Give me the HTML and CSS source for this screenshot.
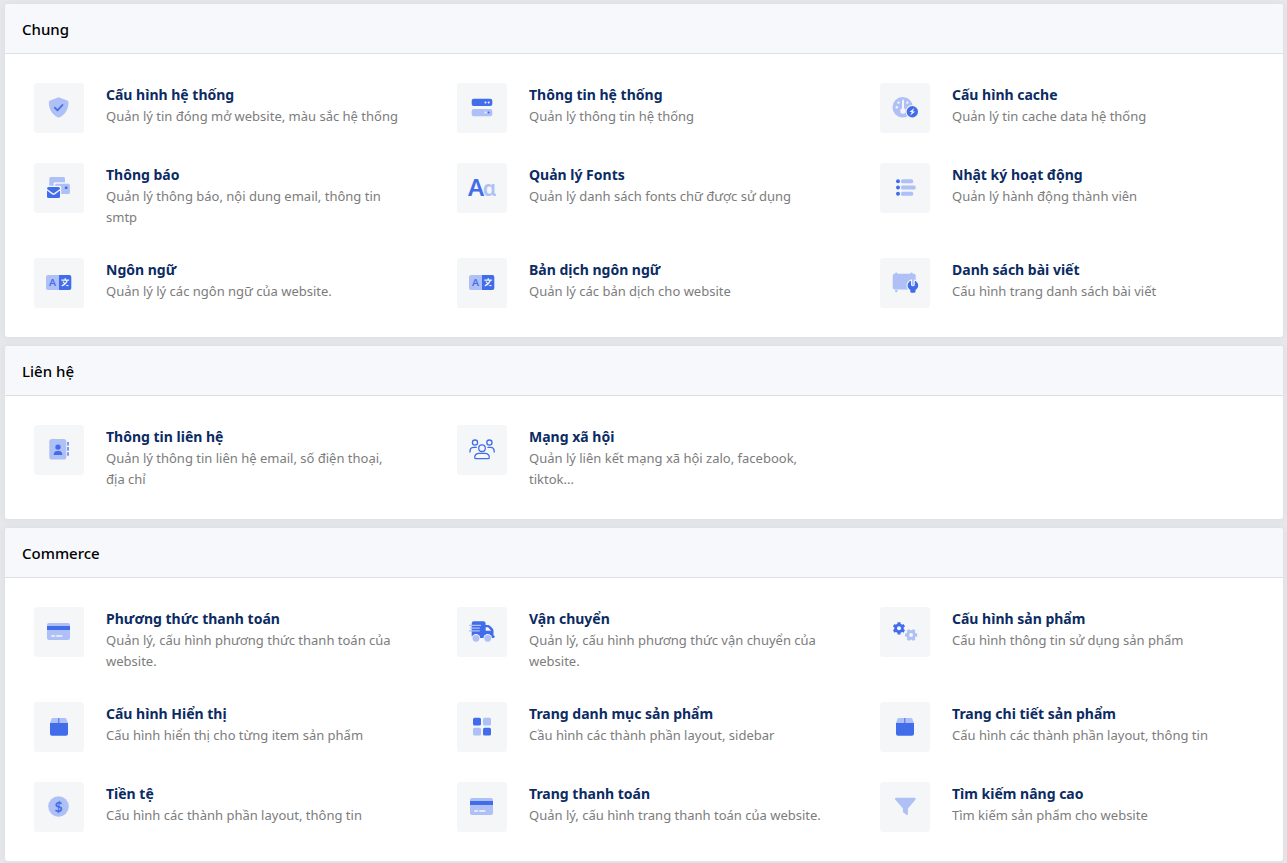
FILE: index.html
```html
<!DOCTYPE html>
<html lang="vi">
<head>
<meta charset="utf-8">
<meta name="viewport" content="width=device-width, initial-scale=1">
<title>Cấu hình</title>
<link rel="stylesheet" href="styles.css">
</head>
<body>
<svg class="sprite" aria-hidden="true">
  <symbol id="i-shield" viewBox="10 10 30 30">
    <path class="light" d="M24.7 14.3l8.6 3.3c.8.3 1.2.9 1.2 1.7 0 6.500-2.800 12-8.700 15a2.500 2.500 0 0 1-2.200 0c-5.900-3-8.700-8.500-8.700-15 0-.8.4-1.400 1.200-1.700z"/>
    <path class="line" d="M20.800 24.700l2.700 2.600 5-5.300"/>
  </symbol>
  <symbol id="i-server" viewBox="10 10 30 30">
    <rect class="dark" x="14.700" y="15.700" width="20.600" height="7.300" rx="2"/>
    <rect class="light" x="14.700" y="26" width="20.600" height="7.200" rx="2"/>
    <circle class="pale" cx="28.500" cy="19.500" r="1"/><circle class="pale" cx="31.700" cy="19.500" r="1"/>
    <circle class="pale" cx="28.500" cy="29.500" r="1"/><circle class="dark" cx="31.700" cy="29.500" r="1"/>
  </symbol>
  <symbol id="i-gauge" viewBox="10 10 30 30">
    <circle class="light" cx="22.700" cy="24.300" r="10.200"/>
    <path class="pale-line" d="M23 17.500v10"/>
    <circle class="pale" cx="23" cy="28" r="2.700"/>
    <circle class="pale" cx="18.500" cy="19.600" r="1.200"/><circle class="pale" cx="16.800" cy="24.300" r="1.200"/><circle class="pale" cx="27.300" cy="19.600" r="1.200"/>
    <circle class="pale" cx="32.300" cy="28.700" r="6.800"/>
    <circle class="dark" cx="32.300" cy="28.700" r="5.700"/>
    <path class="pale" d="M34.300 25l-4.800 3.900h2.300l-1.600 3.600 5-4h-2.400z"/>
  </symbol>
  <symbol id="i-mail" viewBox="10 10 30 30">
    <rect class="light" x="15.300" y="14" width="15.700" height="11" rx="1.500"/>
    <rect class="pale" x="19.700" y="19.300" width="17" height="13" rx="1"/>
    <rect class="light" x="21" y="20.700" width="14.900" height="10.300" rx="1.500"/>
    <rect class="dark" x="30.800" y="23.400" width="2.700" height="2.700" rx=".5"/>
    <rect class="pale" x="12" y="22.800" width="15.200" height="13" rx="1.500"/>
    <rect class="dark" x="13" y="24" width="13" height="11" rx="1.500"/>
    <path class="thin-pale" d="M13 26.800l5.300 3.800q1.200.8 2.400 0l5.300-3.800"/>
  </symbol>
  <symbol id="i-fonts" viewBox="10 10 30 30">
    <text class="dark glyph glyph-fonts" x="19.100" y="33.200" font-size="24" text-anchor="middle">A</text>
    <text class="light glyph glyph-fonts" x="32.300" y="33.200" font-size="21" text-anchor="middle">ɑ</text>
  </symbol>
  <symbol id="i-list" viewBox="10 10 30 30">
    <g class="dark"><circle cx="18" cy="18.300" r="2"/><circle cx="18" cy="24.600" r="2"/><circle cx="18" cy="30.800" r="2"/></g>
    <g class="light"><rect x="21" y="16.300" width="12.200" height="4" rx="1.600"/><rect x="21" y="22.600" width="14.700" height="4" rx="1.600"/><rect x="21" y="28.800" width="12.200" height="4" rx="1.600"/></g>
  </symbol>
  <symbol id="i-language" viewBox="10 10 30 30">
    <path class="light" d="M14 17h11v15H14q-2 0-2-2V19q0-2 2-2z"/>
    <path class="dark" d="M25 17h10.300q2 0 2 2v11q0 2-2 2H25z"/>
    <text class="dark glyph" x="18.500" y="28.200" font-size="10" text-anchor="middle">A</text>
    <path class="thin-pale" d="M27.800 22.100h6.800M31.200 20.700v1.400M33.200 22.300q-1 3.600-5 5.300M29.300 24q1.600 2.600 4.600 3.600"/>
  </symbol>
  <symbol id="i-board" viewBox="10 10 30 30">
    <rect class="light" x="12.700" y="15.800" width="23" height="15.600" rx="2"/>
    <circle class="light" cx="16.300" cy="15.700" r="1.200"/><circle class="light" cx="31.500" cy="15.700" r="1.200"/><circle class="light" cx="16.300" cy="33" r="1.300"/>
    <path class="wrench-halo" d="M31 22.800v3.600q0 1.900 1.900 1.900t1.900-1.900v-3.600c2.200.8 3.400 2.600 3.400 4.800 0 2-1 3.500-2.700 4.300v1.600q0 1.300-1.300 1.300h-2.600q-1.300 0-1.300-1.300v-1.600c-1.700-.8-2.700-2.300-2.700-4.300 0-2.200 1.200-4 3.400-4.800z"/>
    <path class="dark" d="M31 22.800v3.600q0 1.900 1.900 1.900t1.900-1.900v-3.600c2.200.8 3.400 2.600 3.400 4.800 0 2-1 3.500-2.700 4.300v1.600q0 1.300-1.300 1.300h-2.600q-1.300 0-1.300-1.300v-1.600c-1.700-.8-2.700-2.300-2.700-4.300 0-2.200 1.200-4 3.400-4.800z"/>
  </symbol>
  <symbol id="i-contact" viewBox="10 10 30 30">
    <rect class="light" x="15.300" y="14" width="17" height="20.600" rx="2.600"/>
    <circle class="dark" cx="24" cy="22.100" r="2.700"/>
    <path class="dark" d="M19.700 30c0-2.600 1.400-3.900 3.500-3.900h1.700c2.100 0 3.500 1.300 3.500 3.900z"/>
    <path class="tab" d="M33 17h2v3.600h-2zM33 22.100h2v3.600h-2zM33 27.200h2v3.600h-2z"/>
  </symbol>
  <symbol id="i-users" viewBox="10 10 30 30">
    <g class="outline"><circle cx="18" cy="17.600" r="2.600"/><circle cx="32.400" cy="17.600" r="2.600"/><circle cx="25" cy="23.200" r="3.300"/>
    <path d="M18.500 33.600q-.8 0-.8-1c0-2.700 2-4.300 4.500-4.300h5.600c2.500 0 4.500 1.600 4.500 4.300q0 1-.8 1zM13 27v-.6c0-2.600 1.500-4 3.700-4h2.600M37.200 27v-.6c0-2.600-1.500-4-3.700-4h-2.600"/></g>
  </symbol>
  <symbol id="i-card" viewBox="10 10 30 30">
    <rect class="light" x="13" y="16" width="23" height="17" rx="2"/>
    <path class="dark" d="M13 19h23v4H13z"/>
    <path class="dash" d="M17.800 29h2.700M22.800 29h5"/>
  </symbol>
  <symbol id="i-truck" viewBox="10 10 30 30">
    <path class="dark" d="M14.700 16.500q0-2.200 2.200-2.200h9.500q2.200 0 2.200 2.200V18h2.300q1.300 0 2.200.9l2.500 2.600q.9.900.9 2.200v4.800q1.200.1 1.200 1.200t-1.200 1.200H16.700q-2 0-2-2z"/>
    <path class="pale" d="M28.700 20.300h2.300l3.200 3.500h-5.500z"/>
    <circle class="pale" cx="19" cy="31.300" r="4.200"/><circle class="pale" cx="30.700" cy="31.300" r="4.200"/>
    <circle class="light" cx="19" cy="31.300" r="3.400"/><circle class="light" cx="30.700" cy="31.300" r="3.400"/>
    <path class="speed" d="M12.700 18.400h10.800M13.500 21.100h9M12.500 23.900h9.800"/>
  </symbol>
  <symbol id="i-gears" viewBox="10 10 30 30">
    <g class="gear-dark"><path d="M19 15.200v12.200M13.700 18.200l10.600 6.200M13.700 24.400l10.600-6.200"/><circle cx="19" cy="21.300" r="3.300"/></g>
    <g class="gear-light"><path d="M25 28h12.200M28 22.700l6.200 10.600M28 33.300l6.200-10.600"/><circle cx="31.100" cy="28" r="3.300"/></g>
    <circle class="pale" cx="19" cy="21.300" r="2"/><circle class="pale" cx="31.100" cy="28" r="2"/>
  </symbol>
  <symbol id="i-box" viewBox="10 10 30 30">
    <path class="light" d="M18.500 16h12.700q.8 0 1.100.7l1.700 4.500H16l1.500-4.500q.3-.7 1-.7z"/>
    <path class="dark" d="M24.300 16h1v5h8.700v10.700q0 2-2 2H18q-2 0-2-2V21h8.300z"/>
  </symbol>
  <symbol id="i-tiles" viewBox="10 10 30 30">
    <g class="dark"><rect x="16" y="15.700" width="8" height="7.800" rx="1.500"/><rect x="26" y="25.700" width="8" height="7.800" rx="1.500"/></g>
    <g class="light"><rect x="26" y="15.700" width="8" height="7.800" rx="1.500"/><rect x="16" y="25.700" width="8" height="7.800" rx="1.500"/></g>
  </symbol>
  <symbol id="i-money" viewBox="10 10 30 30">
    <circle class="light" cx="24.500" cy="24.500" r="10.300"/>
    <text class="dark glyph" x="24.500" y="29.700" font-size="14" text-anchor="middle">$</text>
  </symbol>
  <symbol id="i-filter" viewBox="10 10 30 30">
    <path class="light" d="M15.900 15.700h18.900q1.500.3.700 1.700l-7.600 9.200v5.500q-.2 1.400-1.500.7l-3-2.200q-.5-.4-.5-1v-3l-7.700-9.200q-.8-1.400.7-1.700z"/>
  </symbol>
</svg>

<main class="page">
  <section class="panel">
    <h2 class="panel-title">Chung</h2>
    <div class="panel-body">
      <a class="item" href="#"><span class="icon"><svg><use href="#i-shield"/></svg></span><span class="text"><strong class="name">Cấu hình hệ thống</strong><span class="desc">Quản lý tin đóng mở website, màu sắc hệ thống</span></span></a>
      <a class="item" href="#"><span class="icon"><svg><use href="#i-server"/></svg></span><span class="text"><strong class="name">Thông tin hệ thống</strong><span class="desc">Quản lý thông tin hệ thống</span></span></a>
      <a class="item" href="#"><span class="icon"><svg><use href="#i-gauge"/></svg></span><span class="text"><strong class="name">Cấu hình cache</strong><span class="desc">Quản lý tin cache data hệ thống</span></span></a>
      <a class="item" href="#"><span class="icon"><svg><use href="#i-mail"/></svg></span><span class="text"><strong class="name">Thông báo</strong><span class="desc">Quản lý thông báo, nội dung email, thông tin smtp</span></span></a>
      <a class="item" href="#"><span class="icon"><svg><use href="#i-fonts"/></svg></span><span class="text"><strong class="name">Quản lý Fonts</strong><span class="desc">Quản lý danh sách fonts chữ được sử dụng</span></span></a>
      <a class="item" href="#"><span class="icon"><svg><use href="#i-list"/></svg></span><span class="text"><strong class="name">Nhật ký hoạt động</strong><span class="desc">Quản lý hành động thành viên</span></span></a>
      <a class="item" href="#"><span class="icon"><svg><use href="#i-language"/></svg></span><span class="text"><strong class="name">Ngôn ngữ</strong><span class="desc">Quản lý lý các ngôn ngữ của website.</span></span></a>
      <a class="item" href="#"><span class="icon"><svg><use href="#i-language"/></svg></span><span class="text"><strong class="name">Bản dịch ngôn ngữ</strong><span class="desc">Quản lý các bản dịch cho website</span></span></a>
      <a class="item" href="#"><span class="icon"><svg><use href="#i-board"/></svg></span><span class="text"><strong class="name">Danh sách bài viết</strong><span class="desc">Cấu hình trang danh sách bài viết</span></span></a>
    </div>
  </section>

  <section class="panel">
    <h2 class="panel-title">Liên hệ</h2>
    <div class="panel-body">
      <a class="item" href="#"><span class="icon"><svg><use href="#i-contact"/></svg></span><span class="text"><strong class="name">Thông tin liên hệ</strong><span class="desc">Quản lý thông tin liên hệ email, số điện thoại, địa chỉ</span></span></a>
      <a class="item" href="#"><span class="icon"><svg><use href="#i-users"/></svg></span><span class="text"><strong class="name">Mạng xã hội</strong><span class="desc">Quản lý liên kết mạng xã hội zalo, facebook, tiktok...</span></span></a>
    </div>
  </section>

  <section class="panel">
    <h2 class="panel-title">Commerce</h2>
    <div class="panel-body">
      <a class="item" href="#"><span class="icon"><svg><use href="#i-card"/></svg></span><span class="text"><strong class="name">Phương thức thanh toán</strong><span class="desc">Quản lý, cấu hình phương thức thanh toán của website.</span></span></a>
      <a class="item" href="#"><span class="icon"><svg><use href="#i-truck"/></svg></span><span class="text"><strong class="name">Vận chuyển</strong><span class="desc">Quản lý, cấu hình phương thức vận chuyển của website.</span></span></a>
      <a class="item" href="#"><span class="icon"><svg><use href="#i-gears"/></svg></span><span class="text"><strong class="name">Cấu hình sản phẩm</strong><span class="desc">Cấu hình thông tin sử dụng sản phẩm</span></span></a>
      <a class="item" href="#"><span class="icon"><svg><use href="#i-box"/></svg></span><span class="text"><strong class="name">Cấu hình Hiển thị</strong><span class="desc">Cấu hình hiển thị cho từng item sản phẩm</span></span></a>
      <a class="item" href="#"><span class="icon"><svg><use href="#i-tiles"/></svg></span><span class="text"><strong class="name">Trang danh mục sản phẩm</strong><span class="desc">Cầu hình các thành phần layout, sidebar</span></span></a>
      <a class="item" href="#"><span class="icon"><svg><use href="#i-box"/></svg></span><span class="text"><strong class="name">Trang chi tiết sản phẩm</strong><span class="desc">Cấu hình các thành phần layout, thông tin</span></span></a>
      <a class="item" href="#"><span class="icon"><svg><use href="#i-money"/></svg></span><span class="text"><strong class="name">Tiền tệ</strong><span class="desc">Cấu hình các thành phần layout, thông tin</span></span></a>
      <a class="item" href="#"><span class="icon"><svg><use href="#i-card"/></svg></span><span class="text"><strong class="name">Trang thanh toán</strong><span class="desc">Quản lý, cấu hình trang thanh toán của website.</span></span></a>
      <a class="item" href="#"><span class="icon"><svg><use href="#i-filter"/></svg></span><span class="text"><strong class="name">Tìm kiếm nâng cao</strong><span class="desc">Tìm kiếm sản phẩm cho website</span></span></a>
    </div>
  </section>
</main>
</body>
</html>
```
FILE: styles.css
```css
* {
  box-sizing: border-box;
}

body {
  margin: 0;
  background: #e5e7eb;
  color: #000;
  font-family: "Noto Sans", "Open Sans", sans-serif;
  font-size: 13px;
  line-height: 21px;
}

.sprite {
  display: none;
}

.page {
  display: flex;
  flex-direction: column;
  gap: 9px;
  padding: 4px 4px 2px 5px;
}

.panel {
  border-radius: 3px;
  background: #fff;
  box-shadow: 0 0 8px rgba(0, 0, 0, 0.05);
}

.panel-title {
  margin: 0;
  padding: 13px 17px 12px;
  border-bottom: 1px solid #dcdfe6;
  border-radius: 3px 3px 0 0;
  background: #f6f8fc;
  font-size: 15px;
  font-weight: 500;
  line-height: 24px;
}

.panel-body {
  display: grid;
  grid-template-columns: repeat(3, minmax(0, 1fr));
  gap: 30px 49px;
  padding: 29px;
}

.item {
  display: flex;
  align-items: flex-start;
  gap: 22px;
  color: inherit;
  text-decoration: none;
}

.icon {
  display: flex;
  flex: none;
  align-items: center;
  justify-content: center;
  width: 50px;
  height: 50px;
  border-radius: 3px;
  background: #f4f6f8;
}

.icon svg {
  width: 30px;
  height: 30px;
}

.text {
  display: flex;
  flex: 1;
  flex-direction: column;
  min-width: 0;
  padding-right: 5px;
}

.name {
  color: #0b2b63;
  font-size: 14px;
  font-weight: 700;
  line-height: 23px;
}

.desc {
  color: #7c7c7c;
}

.light {
  fill: #aec0f5;
}

.dark {
  fill: #416dea;
}

.tab {
  fill: #7d9af0;
}

.pale {
  fill: #f4f6f8;
}

.line,
.outline,
.pale-line,
.thin-pale,
.dash,
.speed {
  fill: none;
  stroke-linecap: round;
  stroke-linejoin: round;
}

.line {
  stroke: #416dea;
  stroke-width: 1.8;
}

.outline {
  stroke: #416dea;
  stroke-width: 1.3;
}

.pale-line {
  stroke: #f4f6f8;
  stroke-width: 2;
}

.thin-pale {
  stroke: #f4f6f8;
  stroke-width: 1.3;
}

.dash {
  stroke: #f4f6f8;
  stroke-width: 1.5;
}

.speed {
  stroke: #aec0f5;
  stroke-width: 1.2;
}

.wrench-halo {
  fill: #f4f6f8;
  stroke: #f4f6f8;
  stroke-width: 2;
}

.gear-dark {
  fill: #416dea;
  stroke: #416dea;
  stroke-width: 3;
}

.gear-light {
  fill: #aec0f5;
  stroke: #aec0f5;
  stroke-width: 3;
}

.glyph {
  font-family: Lato, sans-serif;
  font-weight: 700;
}

.glyph-fonts {
  font-family: "Noto Sans", sans-serif;
  font-weight: 600;
}

@media (max-width: 800px) {
  .panel-body {
    grid-template-columns: minmax(0, 1fr);
  }
}
```
